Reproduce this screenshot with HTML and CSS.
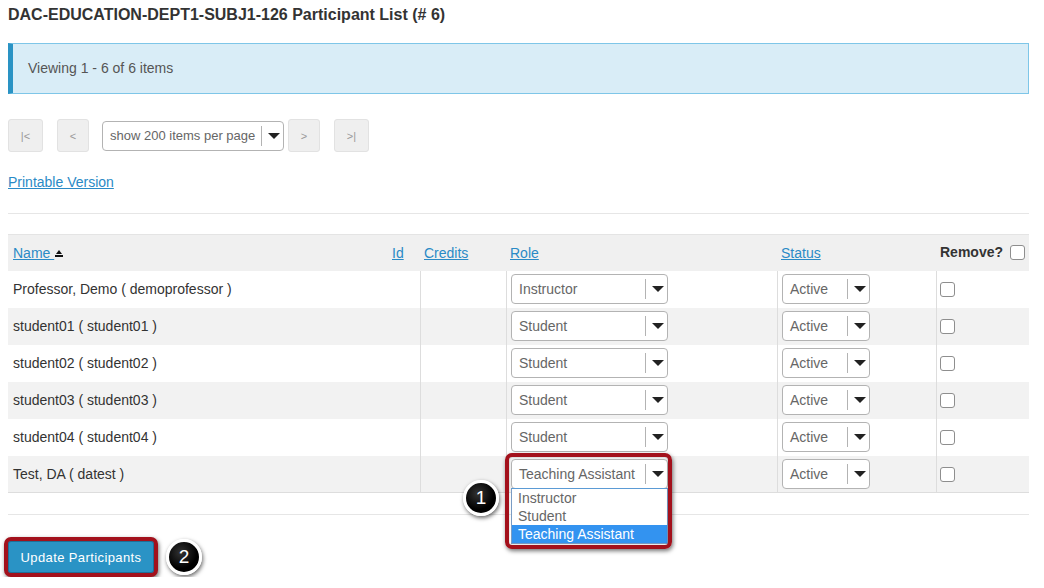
FILE: index.html
```html
<!DOCTYPE html>
<html>
<head>
<meta charset="utf-8">
<link rel="stylesheet" href="styles.css">
</head>
<body>
<div class="page">
  <h1 class="title">DAC-EDUCATION-DEPT1-SUBJ1-126 Participant List (# 6)</h1>
  <div class="alert">Viewing 1 - 6 of 6 items</div>
  <div class="pager">
    <span class="pbtn wide">|&lt;</span>
    <span class="pbtn gap">&lt;</span>
    <div class="fselect pagesize"><span class="val">show 200 items per page</span><span class="arr"><i></i></span></div>
    <span class="pbtn">&gt;</span>
    <span class="pbtn wide gap">&gt;|</span>
  </div>
  <div class="printrow"><a class="link" href="#">Printable Version</a></div>
  <div class="rule"></div>
  <table class="grid">
    <colgroup>
      <col class="w-name"><col class="w-id"><col class="w-credits"><col class="w-role"><col class="w-status"><col class="w-remove">
    </colgroup>
    <thead>
      <tr>
        <th class="c-name"><a class="link" href="#">Name </a><svg class="sort" width="8" height="7" viewBox="0 0 8 7"><polygon points="4,0 7,4 1,4" fill="#111"/><rect x="0" y="5" width="8" height="2" fill="#111"/></svg></th>
        <th class="c-id"><a class="link" href="#">Id</a></th>
        <th class="c-credits"><a class="link" href="#">Credits</a></th>
        <th class="c-role"><a class="link" href="#">Role</a></th>
        <th class="c-status"><a class="link" href="#">Status</a></th>
        <th class="c-remove"><span class="rm">Remove?</span><span class="cb"></span></th>
      </tr>
    </thead>
    <tbody>
      <tr>
        <td class="c-name">Professor, Demo ( demoprofessor )</td><td class="c-id"></td><td class="c-credits bl"></td>
        <td class="c-role bl"><div class="fselect role"><span class="val">Instructor</span><span class="arr"><i></i></span></div></td>
        <td class="c-status bl"><div class="fselect status"><span class="val">Active</span><span class="arr"><i></i></span></div></td>
        <td class="c-remove bl"><span class="cb"></span></td>
      </tr>
      <tr class="alt">
        <td class="c-name">student01 ( student01 )</td><td class="c-id"></td><td class="c-credits bl"></td>
        <td class="c-role bl"><div class="fselect role"><span class="val">Student</span><span class="arr"><i></i></span></div></td>
        <td class="c-status bl"><div class="fselect status"><span class="val">Active</span><span class="arr"><i></i></span></div></td>
        <td class="c-remove bl"><span class="cb"></span></td>
      </tr>
      <tr>
        <td class="c-name">student02 ( student02 )</td><td class="c-id"></td><td class="c-credits bl"></td>
        <td class="c-role bl"><div class="fselect role"><span class="val">Student</span><span class="arr"><i></i></span></div></td>
        <td class="c-status bl"><div class="fselect status"><span class="val">Active</span><span class="arr"><i></i></span></div></td>
        <td class="c-remove bl"><span class="cb"></span></td>
      </tr>
      <tr class="alt">
        <td class="c-name">student03 ( student03 )</td><td class="c-id"></td><td class="c-credits bl"></td>
        <td class="c-role bl"><div class="fselect role"><span class="val">Student</span><span class="arr"><i></i></span></div></td>
        <td class="c-status bl"><div class="fselect status"><span class="val">Active</span><span class="arr"><i></i></span></div></td>
        <td class="c-remove bl"><span class="cb"></span></td>
      </tr>
      <tr>
        <td class="c-name">student04 ( student04 )</td><td class="c-id"></td><td class="c-credits bl"></td>
        <td class="c-role bl"><div class="fselect role"><span class="val">Student</span><span class="arr"><i></i></span></div></td>
        <td class="c-status bl"><div class="fselect status"><span class="val">Active</span><span class="arr"><i></i></span></div></td>
        <td class="c-remove bl"><span class="cb"></span></td>
      </tr>
      <tr class="alt last">
        <td class="c-name">Test, DA ( datest )</td><td class="c-id"></td><td class="c-credits bl"></td>
        <td class="c-role bl">
          <div class="openwrap">
            <div class="fselect role"><span class="val">Teaching Assistant</span><span class="arr"><i></i></span></div>
            <ul class="listbox">
              <li>Instructor</li>
              <li>Student</li>
              <li class="sel">Teaching Assistant</li>
            </ul>
            <div class="redframe"></div>
            <span class="badge b1">1</span>
          </div>
        </td>
        <td class="c-status bl"><div class="fselect status"><span class="val">Active</span><span class="arr"><i></i></span></div></td>
        <td class="c-remove bl"><span class="cb"></span></td>
      </tr>
    </tbody>
  </table>
  <div class="rule rule2"></div>
  <div class="actions">
    <button class="update" type="button">Update Participants</button>
    <span class="badge b2">2</span>
  </div>
</div>
</body>
</html>
```

FILE: styles.css
```css
html, body {
  margin: 0;
  padding: 0;
  background: #fff;
}
body {
  font-family: "Liberation Sans", Arial, sans-serif;
  font-size: 14px;
  color: #333;
}
.page {
  padding: 6px 15px 0 8px;
}
.title {
  margin: 0;
  font-size: 16px;
  line-height: 18px;
  font-weight: bold;
  color: #333;
}
.alert {
  margin-top: 19px;
  height: 19px;
  line-height: 19px;
  padding: 15px 0 15px 15px;
  background: #d9edf7;
  border: 1px solid #7ec6e8;
  border-left: 5px solid #2a93c4;
  color: #555;
}
.pager {
  margin-top: 25px;
  display: flex;
  align-items: center;
  height: 33px;
}
.pbtn {
  box-sizing: border-box;
  width: 32px;
  height: 33px;
  display: flex;
  align-items: center;
  justify-content: center;
  background: #efefef;
  border: 1px solid #e2e2e2;
  border-radius: 3px;
  color: #999;
  font-size: 11px;
}
.pbtn.wide { width: 35px; }
.pbtn.gap { margin-left: 14px; }
.pagesize { margin-left: 13px; margin-right: 4px; width: 182px; height: 29px; }
.pagesize .val { font-size: 13px; }

.fselect {
  box-sizing: border-box;
  display: flex;
  align-items: stretch;
  height: 30px;
  border: 1px solid #b3b3b3;
  border-radius: 4px;
  background: #fff;
  color: #666;
  font-size: 14px;
}
.fselect .val {
  flex: 1;
  display: flex;
  align-items: center;
  padding-left: 7px;
  white-space: nowrap;
  overflow: hidden;
}
.fselect .arr {
  width: 21px;
  display: flex;
  align-items: center;
  justify-content: center;
  border-left: 1px solid #b3b3b3;
  margin: 4px 0;
}
.fselect .arr i {
  display: block;
  width: 0;
  height: 0;
  border-left: 6px solid transparent;
  border-right: 6px solid transparent;
  border-top: 6px solid #222;
  margin-left: 2px;
}
.role { width: 157px; }
.status { width: 88px; }

.printrow {
  margin-top: 20px;
  line-height: 20px;
}
.link {
  color: #2a8ac6;
  text-decoration: underline;
}
.rule {
  margin-top: 21px;
  height: 1px;
  background: #e6e6e6;
}
.grid {
  margin-top: 20px;
  width: 1021px;
  table-layout: fixed;
  border-collapse: separate;
  border-spacing: 0;
}
.w-name { width: 379px; }
.w-id { width: 33px; }
.w-credits { width: 86px; }
.w-role { width: 271px; }
.w-status { width: 159px; }
.w-remove { width: 93px; }

.grid tr { height: 37px; }
.grid th {
  background: #f0f0f0;
  border-top: 1px solid #e4e4e4;
  text-align: left;
  font-weight: normal;
  padding: 0 4px 1px;
  vertical-align: middle;
  white-space: nowrap;
}
.grid th.c-name, .grid td.c-name { padding-left: 5px; }
.grid th.c-id { padding-left: 5px; }
.grid th.c-remove { font-weight: bold; }
.grid th.c-remove .rm { vertical-align: middle; position: relative; top: -1px; }
.grid th.c-remove .cb { margin-left: 7px; vertical-align: middle; position: relative; top: -1px; }
.sort { margin-left: 1px; vertical-align: middle; position: relative; top: 0px; }
.grid td {
  padding: 0 4px 1px;
  vertical-align: middle;
  color: #333;
}
.grid td.bl { border-left: 1px solid #dddddd; }
.grid tr.alt td { background: #f2f2f2; }
.grid tr.last td { border-bottom: 1px solid #dddddd; }
.grid td.c-remove { padding-left: 3px; }

.cb {
  display: inline-block;
  box-sizing: border-box;
  width: 15px;
  height: 15px;
  border: 1px solid #8e8e8e;
  border-radius: 3px;
  background: #fff;
  vertical-align: middle;
}

.openwrap {
  position: relative;
  width: 157px;
}
.listbox {
  position: absolute;
  left: 0;
  top: 29px;
  width: 157px;
  box-sizing: border-box;
  margin: 0;
  padding: 0;
  list-style: none;
  background: #fff;
  border: 1px solid #7a9cc4;
  border-top-color: #5b9bd5;
  z-index: 2;
}
.listbox li {
  height: 18px;
  line-height: 18px;
  padding-left: 6px;
  color: #666;
  font-size: 14px;
}
.listbox li.sel {
  background: #3393f0;
  color: #fff;
}
.redframe {
  position: absolute;
  left: -6px;
  top: -6px;
  width: 167px;
  height: 96px;
  box-sizing: border-box;
  border: 4px solid #a3111c;
  border-radius: 7px;
  box-shadow: 1px 2px 4px rgba(0,0,0,0.55), inset 0 0 2px rgba(0,0,0,0.3);
  z-index: 3;
}
.badge {
  position: absolute;
  box-sizing: border-box;
  width: 36px;
  height: 36px;
  border-radius: 50%;
  background: radial-gradient(circle at 40% 35%, #333 0%, #000 60%);
  border: 3px solid #fff;
  box-shadow: 1px 2px 4px rgba(0,0,0,0.6);
  color: #fff;
  font-size: 19px;
  display: flex;
  align-items: center;
  justify-content: center;
  z-index: 4;
}
.b1 { left: -48px; top: 21px; }

.rule2 { margin-top: 21px; }
.actions {
  margin-top: 22px;
  display: flex;
  align-items: center;
}
.update {
  margin-left: -4px;
  box-sizing: border-box;
  width: 154px;
  height: 40px;
  padding: 0;
  border: 4px solid #a3111c;
  border-radius: 7px;
  background: #2a93c5;
  color: #fff;
  font-family: "Liberation Sans", Arial, sans-serif;
  font-size: 13px;
  letter-spacing: 0.4px;
  box-shadow: 1px 2px 4px rgba(0,0,0,0.55), inset 0 0 0 1px #1e6f98;
}
.b2 {
  position: relative;
  margin-left: 8px;
}
```
